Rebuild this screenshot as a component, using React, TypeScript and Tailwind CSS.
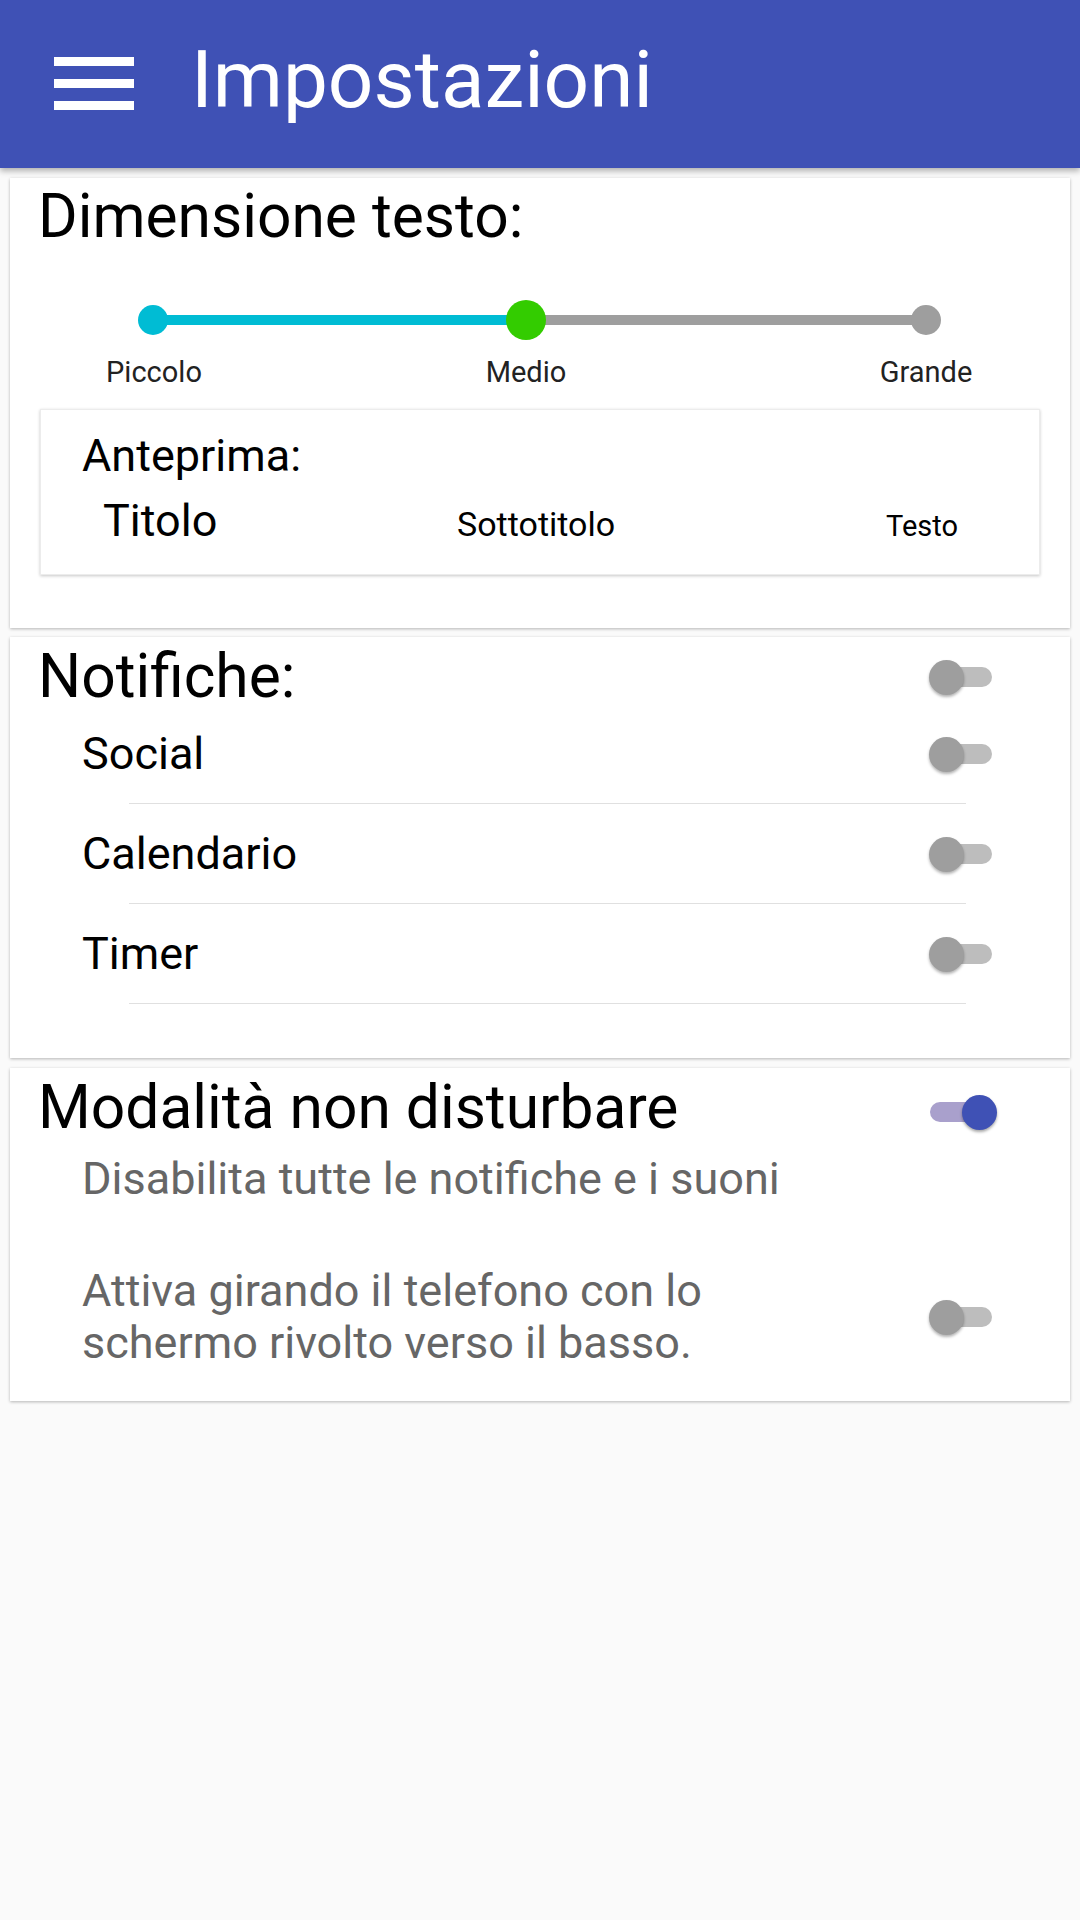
import React from "react";

function Toggle({ on = false }: { on?: boolean }) {
  return (
    <div
      className={
        "relative h-[20px] w-[62px] shrink-0 rounded-full " +
        (on ? "bg-[#a9a0cc]" : "bg-[#bdbdbd]")
      }
    >
      {on ? (
        <div className="absolute -right-[5px] -top-[7px] h-[35px] w-[35px] rounded-full bg-[#3f51b5] shadow-[0_2px_3px_rgba(0,0,0,0.35)]" />
      ) : (
        <div className="absolute -left-[1px] -top-[7px] h-[35px] w-[35px] rounded-full bg-[#9e9e9e] shadow-[0_2px_3px_rgba(0,0,0,0.3)]" />
      )}
    </div>
  );
}

function NotifRow({ label }: { label: string }) {
  return (
    <>
      <div className="flex h-[45px] items-center justify-between pl-[72px] pr-[78px] text-[45px] leading-[45px] text-black">
        <span>{label}</span>
        <Toggle />
      </div>
      <div className="ml-[119px] mt-[27px] h-px w-[837px] bg-[#e0e0e0]" />
    </>
  );
}

const card = "mx-[10px] bg-white shadow-[0_1px_3px_rgba(0,0,0,0.28)]";

export default function App() {
  return (
    <div className="min-h-screen bg-[#fafafa] font-['Roboto',sans-serif]">
      {/* app bar */}
      <header className="relative z-10 flex h-[168px] items-start bg-[#3f51b5] shadow-[0_3px_6px_rgba(0,0,0,0.3)]">
        <div className="ml-[54px] mt-[57px] flex flex-col gap-[13px]">
          <div className="h-[9px] w-[80px] bg-white" />
          <div className="h-[9px] w-[80px] bg-white" />
          <div className="h-[9px] w-[80px] bg-white" />
        </div>
        <h1 className="ml-[57px] mt-[40px] text-[80px] leading-[80px] text-white">
          Impostazioni
        </h1>
      </header>

      <main className="flex flex-col pt-[10px]">
        {/* text size */}
        <section className={card + " pb-[53px] pt-[9px]"}>
          <h2 className="pl-[28px] text-[60.5px] leading-[60px] text-black">
            Dimensione testo:
          </h2>

          <div className="ml-[128px] mt-[53px] flex h-[40px] w-[803px] items-center">
            <div className="relative z-10 h-[30px] w-[30px] shrink-0 rounded-full bg-[#00bcd4]" />
            <div className="-mx-[4px] h-[10px] w-[346px] bg-[#00bcd4]" />
            <div className="relative z-10 h-[40px] w-[40px] shrink-0 rounded-full bg-[#33cc00]" />
            <div className="-mx-[4px] h-[10px] w-[373px] bg-[#9e9e9e]" />
            <div className="relative z-10 h-[30px] w-[30px] shrink-0 rounded-full bg-[#9e9e9e]" />
          </div>

          <div className="ml-[44px] mt-[18px] flex text-[29px] leading-[29px] text-[#222]">
            <span className="w-[200px] text-center">Piccolo</span>
            <span className="ml-[172px] w-[200px] text-center">Medio</span>
            <span className="ml-[200px] w-[200px] text-center">Grande</span>
          </div>

          <div className="mx-[30px] mt-[22px] h-[166px] border border-[#ececec] pl-[41px] pt-[23px] shadow-[0_1px_3px_rgba(0,0,0,0.22)]">
            <div className="text-[45px] leading-[45px] text-black">Anteprima:</div>
            <div className="mt-[20px] flex items-baseline text-black">
              <span className="ml-[21px] w-[354px] text-[45px] leading-[45px]">Titolo</span>
              <span className="w-[429px] text-[34px] leading-[34px]">Sottotitolo</span>
              <span className="text-[29px] leading-[29px]">Testo</span>
            </div>
          </div>
        </section>

        {/* notifications */}
        <section className={card + " mt-[9px] pb-[54px] pt-[10px]"}>
          <div className="flex h-[60px] items-center justify-between pl-[28px] pr-[78px]">
            <h2 className="text-[60.5px] leading-[60px] text-black">Notifiche:</h2>
            <Toggle />
          </div>
          <div className="mt-[24px]">
            <NotifRow label="Social" />
          </div>
          <div className="mt-[27px]">
            <NotifRow label="Calendario" />
          </div>
          <div className="mt-[27px]">
            <NotifRow label="Timer" />
          </div>
        </section>

        {/* do not disturb */}
        <section className={card + " mt-[10px] pb-[32px] pt-[10px]"}>
          <div className="flex h-[60px] items-center justify-between pl-[28px] pr-[78px]">
            <h2 className="text-[60.5px] leading-[60px] text-black">Modalità non disturbare</h2>
            <div className="mt-[8px]">
              <Toggle on />
            </div>
          </div>
          <p className="mt-[18px] pl-[72px] text-[45px] leading-[45px] text-[#666]">
            Disabilita tutte le notifiche e i suoni
          </p>
          <div className="mt-[64px] flex items-center justify-between pl-[72px] pr-[78px]">
            <p className="text-[45px] leading-[52px] text-[#666]">
              Attiva girando il telefono con lo
              <br />
              schermo rivolto verso il basso.
            </p>
            <Toggle />
          </div>
        </section>
      </main>
    </div>
  );
}
